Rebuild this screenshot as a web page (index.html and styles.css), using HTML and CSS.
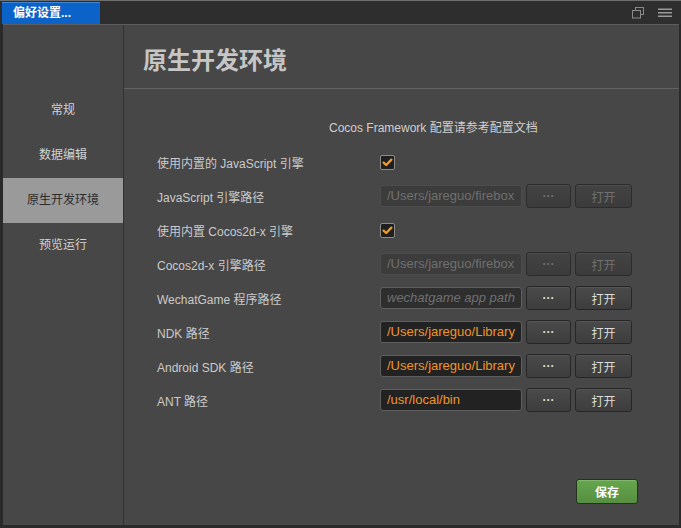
FILE: index.html
```html
<!DOCTYPE html>
<html lang="zh">
<head>
<meta charset="utf-8">
<title>偏好设置</title>
<link rel="stylesheet" href="styles.css">
</head>
<body>
<div class="window">
  <div class="titlebar">
    <div class="tab">偏好设置...</div>
    <div class="tools">
      <svg class="ico" width="14" height="12" viewBox="0 0 14 12">
        <rect x="4.5" y="0.5" width="8" height="7" fill="none" stroke="#8a8a8a"/>
        <rect x="1.5" y="3.5" width="8" height="7.5" fill="#2e2e2e" stroke="#8a8a8a"/>
      </svg>
      <svg class="ico" width="14" height="10" viewBox="0 0 14 10">
        <rect x="0" y="0.5" width="14" height="1.5" fill="#9a9a9a"/>
        <rect x="0" y="4" width="14" height="1.5" fill="#9a9a9a"/>
        <rect x="0" y="7.5" width="14" height="1.5" fill="#9a9a9a"/>
      </svg>
    </div>
  </div>
  <div class="body">
    <nav class="sidebar">
      <div class="nav-item">常规</div>
      <div class="nav-item">数据编辑</div>
      <div class="nav-item active">原生开发环境</div>
      <div class="nav-item">预览运行</div>
    </nav>
    <main class="panel">
      <header class="panel-head"><h1>原生开发环境</h1></header>
      <section class="panel-content">
        <p class="hint">Cocos Framework 配置请参考配置文档</p>
        <div class="form">
          <div class="row">
            <span class="label">使用内置的 JavaScript 引擎</span>
            <div class="controls"><span class="check"><svg width="13" height="13" viewBox="0 0 13 13"><path d="M2.6 6.6 L5.2 9 L10.4 3.6" fill="none" stroke="#f39a2b" stroke-width="2.3" stroke-linecap="round" stroke-linejoin="round"/></svg></span></div>
          </div>
          <div class="row">
            <span class="label">JavaScript 引擎路径</span>
            <div class="controls">
              <div class="input disabled">/Users/jareguo/firebox</div>
              <button class="btn dots disabled">···</button>
              <button class="btn open disabled">打开</button>
            </div>
          </div>
          <div class="row">
            <span class="label">使用内置 Cocos2d-x 引擎</span>
            <div class="controls"><span class="check"><svg width="13" height="13" viewBox="0 0 13 13"><path d="M2.6 6.6 L5.2 9 L10.4 3.6" fill="none" stroke="#f39a2b" stroke-width="2.3" stroke-linecap="round" stroke-linejoin="round"/></svg></span></div>
          </div>
          <div class="row">
            <span class="label">Cocos2d-x 引擎路径</span>
            <div class="controls">
              <div class="input disabled">/Users/jareguo/firebox</div>
              <button class="btn dots disabled">···</button>
              <button class="btn open disabled">打开</button>
            </div>
          </div>
          <div class="row">
            <span class="label">WechatGame 程序路径</span>
            <div class="controls">
              <div class="input placeholder">wechatgame app path</div>
              <button class="btn dots">···</button>
              <button class="btn open">打开</button>
            </div>
          </div>
          <div class="row">
            <span class="label">NDK 路径</span>
            <div class="controls">
              <div class="input">/Users/jareguo/Library</div>
              <button class="btn dots">···</button>
              <button class="btn open">打开</button>
            </div>
          </div>
          <div class="row">
            <span class="label">Android SDK 路径</span>
            <div class="controls">
              <div class="input">/Users/jareguo/Library</div>
              <button class="btn dots">···</button>
              <button class="btn open">打开</button>
            </div>
          </div>
          <div class="row">
            <span class="label">ANT 路径</span>
            <div class="controls">
              <div class="input">/usr/local/bin</div>
              <button class="btn dots">···</button>
              <button class="btn open">打开</button>
            </div>
          </div>
        </div>
        <div class="footer"><button class="save">保存</button></div>
      </section>
    </main>
  </div>
</div>
</body>
</html>
```

FILE: styles.css
```css
* { box-sizing: border-box; }
html, body {
  margin: 0;
  padding: 0;
  width: 681px;
  height: 528px;
  overflow: hidden;
  background: #2a2a2a;
  font-family: "Liberation Sans", "Noto Sans CJK SC", sans-serif;
  font-size: 12px;
}
.window {
  display: flex;
  flex-direction: column;
  height: 528px;
}
.titlebar {
  height: 24px;
  border-top: 1px solid #6e6e6e;
  background: #2e2e2e;
  display: flex;
  align-items: flex-start;
  padding: 1px 0 0 2px;
}
.tab {
  width: 98px;
  height: 22px;
  background: #0b62c8;
  border-top: 1px solid #3f86d8;
  color: #ffffff;
  font-weight: bold;
  font-size: 12px;
  line-height: 20px;
  padding-left: 11px;
}
.tools {
  margin-left: auto;
  display: flex;
  align-items: center;
  gap: 13px;
  height: 22px;
  padding-right: 9px;
}
.ico { display: block; }
.body {
  flex: 1;
  display: flex;
  border-top: 1px solid #5e5e5e;
  margin: 0 2px 3px 3px;
}
.sidebar {
  width: 121px;
  background: #474747;
  border-right: 1px solid #313131;
  padding-top: 63px;
}
.nav-item {
  height: 45px;
  line-height: 45px;
  text-align: center;
  color: #d2d2d2;
  font-size: 12px;
}
.nav-item.active {
  background: #9a9a9a;
  color: #2c2c2c;
}
.panel {
  flex: 1;
  background: #474747;
  display: flex;
  flex-direction: column;
}
.panel-head {
  height: 64px;
  border-bottom: 1px solid #626262;
  display: flex;
  align-items: center;
  padding: 3px 0 0 19px;
}
.panel-head h1 {
  margin: 0;
  font-size: 24px;
  font-weight: bold;
  color: #c6c6c6;
}
.panel-content {
  flex: 1;
  display: flex;
  flex-direction: column;
  padding: 30px 0 0 33px;
}
.hint {
  margin: 0 0 8px 0;
  padding-left: 172px;
  line-height: 18px;
  color: #cfcfcf;
  font-size: 12px;
}
.row {
  height: 34px;
  display: grid;
  grid-template-columns: 223px auto;
  align-items: center;
}
.label {
  color: #cacaca;
  font-size: 12px;
}
.controls {
  display: flex;
  align-items: center;
  gap: 4px;
}
.check {
  width: 15px;
  height: 15px;
  border: 1px solid #8c8c8c;
  background: #1f1f1f;
  border-radius: 2px;
  display: flex;
  align-items: center;
  justify-content: center;
  margin-top: 1px;
}
.check svg { display: block; }
.input {
  width: 142px;
  height: 22px;
  border: 1px solid #5f5f5f;
  border-radius: 3px;
  background: #222222;
  color: #f0952d;
  font-size: 13px;
  line-height: 20px;
  padding-left: 6px;
  white-space: nowrap;
  overflow: hidden;
}
.input.disabled {
  background: #3c3c3c;
  border-color: #4c4c4c;
  color: #6f6f6f;
}
.input.placeholder {
  background: #2e2e2e;
  border-color: #5f5f5f;
  color: #707070;
  font-style: italic;
}
.btn {
  height: 24px;
  border: 1px solid #262626;
  border-radius: 3px;
  background: linear-gradient(#4a4a4a, #3d3d3d);
  color: #dcdcdc;
  font-family: "Liberation Sans", "Noto Sans CJK SC", sans-serif;
  font-size: 12px;
  padding: 0;
  box-shadow: inset 0 1px 0 #555555;
}
.btn.dots { width: 45px; font-weight: bold; font-size: 12px; }
.btn.open { width: 57px; }
.btn.disabled {
  color: #707070;
  background: linear-gradient(#434343, #3b3b3b);
  border-color: #2c2c2c;
  box-shadow: inset 0 1px 0 #4c4c4c;
}
.footer {
  margin-top: auto;
  padding: 0 0 21px 419px;
}
.save {
  width: 62px;
  height: 25px;
  border: 1px solid #24331d;
  border-radius: 3px;
  background: linear-gradient(#66a64e, #568f41);
  color: #ffffff;
  font-weight: bold;
  font-size: 12px;
  font-family: "Liberation Sans", "Noto Sans CJK SC", sans-serif;
  padding: 0;
  box-shadow: inset 0 1px 0 #7fb86a;
}
```
